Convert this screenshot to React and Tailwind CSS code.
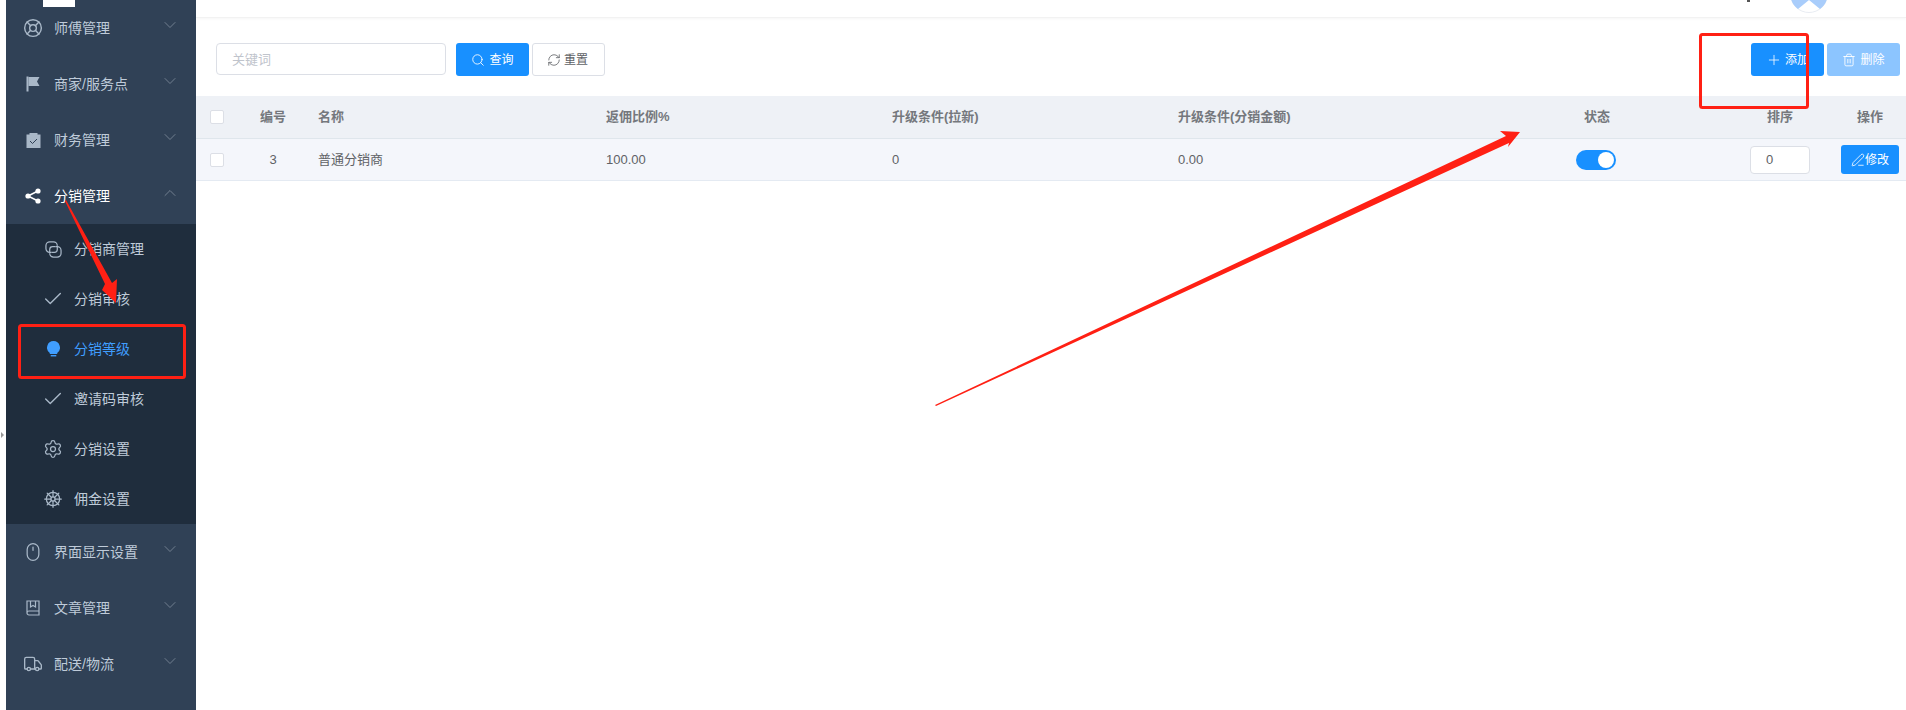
import React from "react";
import {
  Check,
  ChevronDown,
  ChevronUp,
  LifeBuoy,
  Mouse,
  PenLine,
  Plus,
  RefreshCw,
  Search,
  Settings,
  ShipWheel,
  Trash2,
  Truck,
} from "lucide-react";

const font = "font-['Liberation_Sans','Noto_Sans_CJK_SC',sans-serif]";

const FlagIcon = () => (
  <svg width="14" height="16" viewBox="0 0 14 16" fill="#a9b8c8">
    <rect x="0.500" y="0.500" width="2" height="15" />
    <path d="M2.500 1h11l-2.500 4.500 2.500 4.500h-11z" />
  </svg>
);

const ClaimIcon = () => (
  <svg width="15" height="16" viewBox="0 0 15 16">
    <path d="M0.500 2.500h3V1h8v1.500h3V16H.5z" fill="#a9b8c8" />
    <path d="M4 9l2.500 2.500L11 7" fill="none" stroke="#304156" strokeWidth="1" />
  </svg>
);

const ShareIcon = () => (
  <svg width="16" height="16" viewBox="0 0 16 16" fill="#fff">
    <circle cx="13" cy="3" r="2.600" />
    <circle cx="3" cy="8" r="2.600" />
    <circle cx="13" cy="13" r="2.600" />
    <path d="M3 8l10-5M3 8l10 5" stroke="#fff" strokeWidth="1.400" />
  </svg>
);

const BookIcon = () => (
  <svg width="14" height="16" viewBox="0 0 14 16" fill="none" stroke="#a9b8c8" strokeWidth="1.200">
    <path d="M1 13V1h12v14H3a2 2 0 0 1-2-2a2 2 0 0 1 2-2h10" />
    <path d="M4.500 1v6l2.500-1.500L9.500 7V1" />
  </svg>
);

const ConnectionIcon = () => (
  <svg width="17" height="17" viewBox="0 0 18 18" fill="none" stroke="#a9b8c8" strokeWidth="1.300">
    <path d="M7 12H5a4 4 0 0 1-4-4V5a4 4 0 0 1 4-4h4a4 4 0 0 1 4 4" />
    <path d="M11 6h2a4 4 0 0 1 4 4v3a4 4 0 0 1-4 4H9a4 4 0 0 1-4-4" />
    <path d="M5 13V9a3 3 0 0 1 3-3h3" />
    <path d="M13 5v4a3 3 0 0 1-3 3H7" />
  </svg>
);

const BulbIcon = () => (
  <svg width="13" height="16" viewBox="0 0 14 17" fill="#409eff">
    <path d="M7 0a7 7 0 0 1 4 12.700V14H3v-1.300A7 7 0 0 1 7 0z" />
    <rect x="4" y="15" width="6" height="1.500" />
  </svg>
);

const navIcon = "w-5 h-5 shrink-0 text-[#a9b8c8]";

const topMenus = [
  { label: "师傅管理", icon: <LifeBuoy className={navIcon} strokeWidth={1.7} /> },
  { label: "商家/服务点", icon: <FlagIcon /> },
  { label: "财务管理", icon: <ClaimIcon /> },
];

const bottomMenus = [
  { label: "界面显示设置", icon: <Mouse className={navIcon} strokeWidth={1.5} /> },
  { label: "文章管理", icon: <BookIcon /> },
  { label: "配送/物流", icon: <Truck className={navIcon} strokeWidth={1.6} /> },
];

const subIcon = "w-5 h-5 shrink-0 text-[#a9b8c8]";
const checkIcon = "w-[22px] h-[22px] shrink-0 text-[#a9b8c8]";

const subMenus = [
  { label: "分销商管理", icon: <ConnectionIcon /> },
  { label: "分销审核", icon: <Check className={checkIcon} strokeWidth={1.5} /> },
  { label: "分销等级", icon: <BulbIcon />, active: true },
  { label: "邀请码审核", icon: <Check className={checkIcon} strokeWidth={1.5} /> },
  { label: "分销设置", icon: <Settings className={subIcon} strokeWidth={1.5} /> },
  { label: "佣金设置", icon: <ShipWheel className={subIcon} strokeWidth={1.5} /> },
];

const NavItem = ({ label, icon, open, white }) => (
  <div className="h-14 shrink-0 flex items-center pl-[19px] pr-[16px]">
    <span className="w-4 flex justify-center shrink-0">{icon}</span>
    <span className={`ml-[13px] flex-1 text-sm ${white ? "text-white" : "text-[#bfcbd9]"}`}>{label}</span>
    {open ? (
      <ChevronUp className="w-5 h-5 -mt-1.5 text-[#7d8a9a]" strokeWidth={1} />
    ) : (
      <ChevronDown className="w-5 h-5 -mt-1.5 text-[#7d8a9a]" strokeWidth={1} />
    )}
  </div>
);

const Sidebar = () => (
  <aside className="w-[190px] shrink-0 h-full bg-[#304156] flex flex-col overflow-hidden">
    {topMenus.map((m) => (
      <NavItem key={m.label} {...m} />
    ))}
    <NavItem label="分销管理" icon={<ShareIcon />} open white />
    <div className="bg-[#1f2d3d] shrink-0">
      {subMenus.map((m) => (
        <div key={m.label} className="h-[50px] flex items-center pl-[38px]">
          <span className="w-[18px] flex justify-center shrink-0">{m.icon}</span>
          <span className={`ml-3 text-sm ${m.active ? "text-[#409eff]" : "text-[#bfcbd9]"}`}>{m.label}</span>
        </div>
      ))}
    </div>
    {bottomMenus.map((m) => (
      <NavItem key={m.label} {...m} />
    ))}
  </aside>
);

const rowGrid = "grid grid-cols-[54px_46px_288px_286px_286px_318px_246px_120px_60px_6px] items-center";

const Table = () => (
  <div className="text-[13px]">
    <div className={`${rowGrid} h-[43px] bg-[#eef1f6] border-b border-[#dfe6ec] font-bold text-[#75787d]`}>
      <span className="pl-[14px] flex">
        <span className="w-3.5 h-3.5 bg-white border border-[#dcdfe6] rounded-[2px]" />
      </span>
      <span className="text-center">编号</span>
      <span className="pl-[22px]">名称</span>
      <span className="pl-[22px]">返佣比例%</span>
      <span className="pl-[22px]">升级条件(拉新)</span>
      <span className="pl-[22px]">升级条件(分销金额)</span>
      <span className="text-center">状态</span>
      <span className="text-center">排序</span>
      <span className="text-center">操作</span>
      <span />
    </div>
    <div className={`${rowGrid} h-[42px] bg-[#f4f6fb] border-b border-[#e4eaf2] text-[#606266]`}>
      <span className="pl-[14px] flex">
        <span className="w-3.5 h-3.5 bg-white border border-[#dcdfe6] rounded-[2px]" />
      </span>
      <span className="text-center">3</span>
      <span className="pl-[22px]">普通分销商</span>
      <span className="pl-[22px]">100.00</span>
      <span className="pl-[22px]">0</span>
      <span className="pl-[22px]">0.00</span>
      <span className="flex justify-center pr-0.5">
        <span className="w-10 h-5 rounded-full bg-[#1890ff] flex items-center justify-end pr-0.5">
          <span className="w-4 h-4 rounded-full bg-white" />
        </span>
      </span>
      <span className="flex justify-center">
        <input
          defaultValue="0"
          className="w-[60px] h-7 bg-white border border-[#dcdfe6] rounded pl-[15px] text-[13px] text-[#606266] outline-none"
        />
      </span>
      <span className="flex pl-px">
        <button className="w-[58px] h-[29px] bg-[#1890ff] rounded-[3px] text-white text-xs flex items-center justify-center">
          <PenLine className="w-3.5 h-3.5" strokeWidth={1.4} />
          修改
        </button>
      </span>
      <span />
    </div>
  </div>
);

const Annotations = () => (
  <svg className="absolute inset-0 pointer-events-none" width="1906" height="710" viewBox="0 0 1906 710">
    <polygon points="65,201 105,284 102,290 116,303 117,279 112,283 66,200" fill="#ff2014" />
    <rect x="19.500" y="325.500" width="165" height="52" rx="2" fill="none" stroke="#ff2014" strokeWidth="3" />
    <rect x="1700.500" y="34.500" width="107" height="73" rx="2" fill="none" stroke="#ff2014" strokeWidth="3" />
    <polygon points="935,405 1506,136 1500,131 1520,132 1508,147 1509,143 936,406" fill="#ff2014" />
  </svg>
);

const App = () => {
  return (
    <div className={`relative w-[1906px] h-[710px] overflow-hidden bg-white flex ${font}`}>
      {/* collapse handle */}
      <div className="w-1.5 shrink-0 h-full bg-white flex items-center">
        <span className="translate-y-[80px] w-0 h-0 border-y-[3px] border-y-transparent border-l-[3px] border-l-[#999] ml-px" />
      </div>

      <Sidebar />

      {/* logo clipped by scroll */}
      <div className="absolute left-[43px] top-0 w-8 h-[7px] bg-white" />
      <div className="absolute left-[87px] top-0 h-[3px] overflow-hidden">
        <p className="-mt-[22px] text-lg leading-6 font-bold text-white">管理后台</p>
      </div>

      <main className="flex-1 min-w-0 flex flex-col">
        <header className="relative h-[18px] shrink-0 bg-white border-b border-[#f2f2f2] shadow-[0_1px_3px_rgba(0,0,0,0.04)] overflow-hidden">
          <span className="absolute left-[1551px] top-0 w-[3px] h-0.5 bg-[#555]" />
          <svg className="absolute left-[1594px] top-[-25px]" width="38" height="38" viewBox="0 0 38 38">
            <circle cx="19" cy="19" r="18.500" fill="#fff" stroke="#e8ecf2" />
            <path d="M0.500 19A18.500 18.500 0 0 0 8 34L19 25L30 34A18.500 18.500 0 0 0 37.500 19z" fill="#a9cdfb" />
          </svg>
        </header>

        <div className="pt-[25px] pl-5 pr-1.5 pb-5 flex items-start justify-between">
          <div className="flex items-start">
            <input
              placeholder="关键词"
              className="w-[230px] h-8 border border-[#dcdfe6] rounded pl-[15px] text-[13px] outline-none placeholder:text-[#c0c4cc]"
            />
            <button className="ml-2.5 w-[73px] h-[33px] bg-[#1890ff] rounded-[3px] text-white text-xs flex items-center justify-center gap-1">
              <Search className="w-3.5 h-3.5" strokeWidth={1.5} />
              查询
            </button>
            <button className="ml-[3px] w-[73px] h-[33px] bg-white border border-[#dcdfe6] rounded-[3px] text-[#606266] text-xs flex items-center justify-center gap-[3px] pr-0.5">
              <RefreshCw className="w-3.5 h-3.5" strokeWidth={1.4} />
              重置
            </button>
          </div>
          <div className="flex items-start gap-[3px]">
            <button className="w-[73px] h-[33px] bg-[#1890ff] rounded-[3px] text-white text-xs flex items-center justify-center gap-[3px]">
              <Plus className="w-4 h-4" strokeWidth={1.2} />
              添加
            </button>
            <button className="w-[73px] h-[33px] bg-[#8cc5ff] rounded-[3px] text-white text-xs flex items-center justify-center gap-1">
              <Trash2 className="w-3.5 h-3.5" strokeWidth={1.5} />
              删除
            </button>
          </div>
        </div>

        <Table />
      </main>

      <Annotations />
    </div>
  );
};

export default App;
